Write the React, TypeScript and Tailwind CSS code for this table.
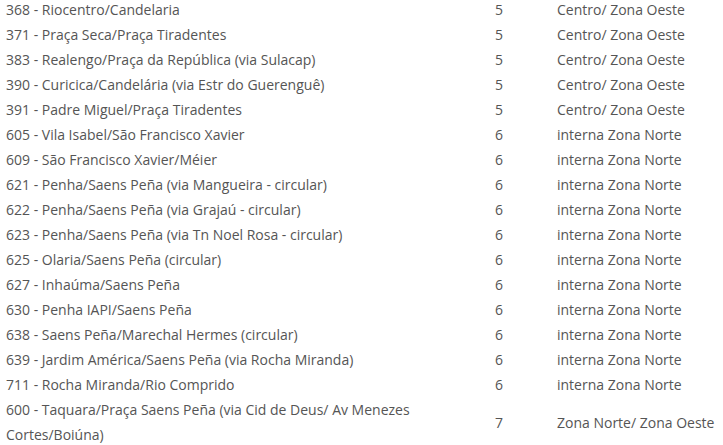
const rows: [string, string, string][] = [
  ["368 - Riocentro/Candelaria", "5", "Centro/ Zona Oeste"],
  ["371 - Praça Seca/Praça Tiradentes", "5", "Centro/ Zona Oeste"],
  ["383 - Realengo/Praça da República (via Sulacap)", "5", "Centro/ Zona Oeste"],
  ["390 - Curicica/Candelária (via Estr do Guerenguê)", "5", "Centro/ Zona Oeste"],
  ["391 - Padre Miguel/Praça Tiradentes", "5", "Centro/ Zona Oeste"],
  ["605 - Vila Isabel/São Francisco Xavier", "6", "interna Zona Norte"],
  ["609 - São Francisco Xavier/Méier", "6", "interna Zona Norte"],
  ["621 - Penha/Saens Peña (via Mangueira - circular)", "6", "interna Zona Norte"],
  ["622 - Penha/Saens Peña (via Grajaú - circular)", "6", "interna Zona Norte"],
  ["623 - Penha/Saens Peña (via Tn Noel Rosa - circular)", "6", "interna Zona Norte"],
  ["625 - Olaria/Saens Peña (circular)", "6", "interna Zona Norte"],
  ["627 - Inhaúma/Saens Peña", "6", "interna Zona Norte"],
  ["630 - Penha IAPI/Saens Peña", "6", "interna Zona Norte"],
  ["638 - Saens Peña/Marechal Hermes (circular)", "6", "interna Zona Norte"],
  ["639 - Jardim América/Saens Peña (via Rocha Miranda)", "6", "interna Zona Norte"],
  ["711 - Rocha Miranda/Rio Comprido", "6", "interna Zona Norte"],
  ["600 - Taquara/Praça Saens Peña (via Cid de Deus/ Av Menezes Cortes/Boiúna)", "7", "Zona Norte/ Zona Oeste"],
]

export default function App() {
  return (
    <div className="w-[723px] h-[445px] overflow-hidden bg-white font-['Open_Sans',sans-serif] text-[14px] leading-[25px] text-[#555]">
      {/* route table, first row cut at the top */}
      <div className="mt-[-3px] grid grid-cols-[489px_62px_1fr]">
        {rows.map(([line, zone, area]) => (
          <div key={line} className="contents">
            <div className="px-[6px] flex items-center">{line}</div>
            <div className="px-[6px] flex items-center">{zone}</div>
            <div className="px-[6px] flex items-center">{area}</div>
          </div>
        ))}
      </div>
    </div>
  )
}
